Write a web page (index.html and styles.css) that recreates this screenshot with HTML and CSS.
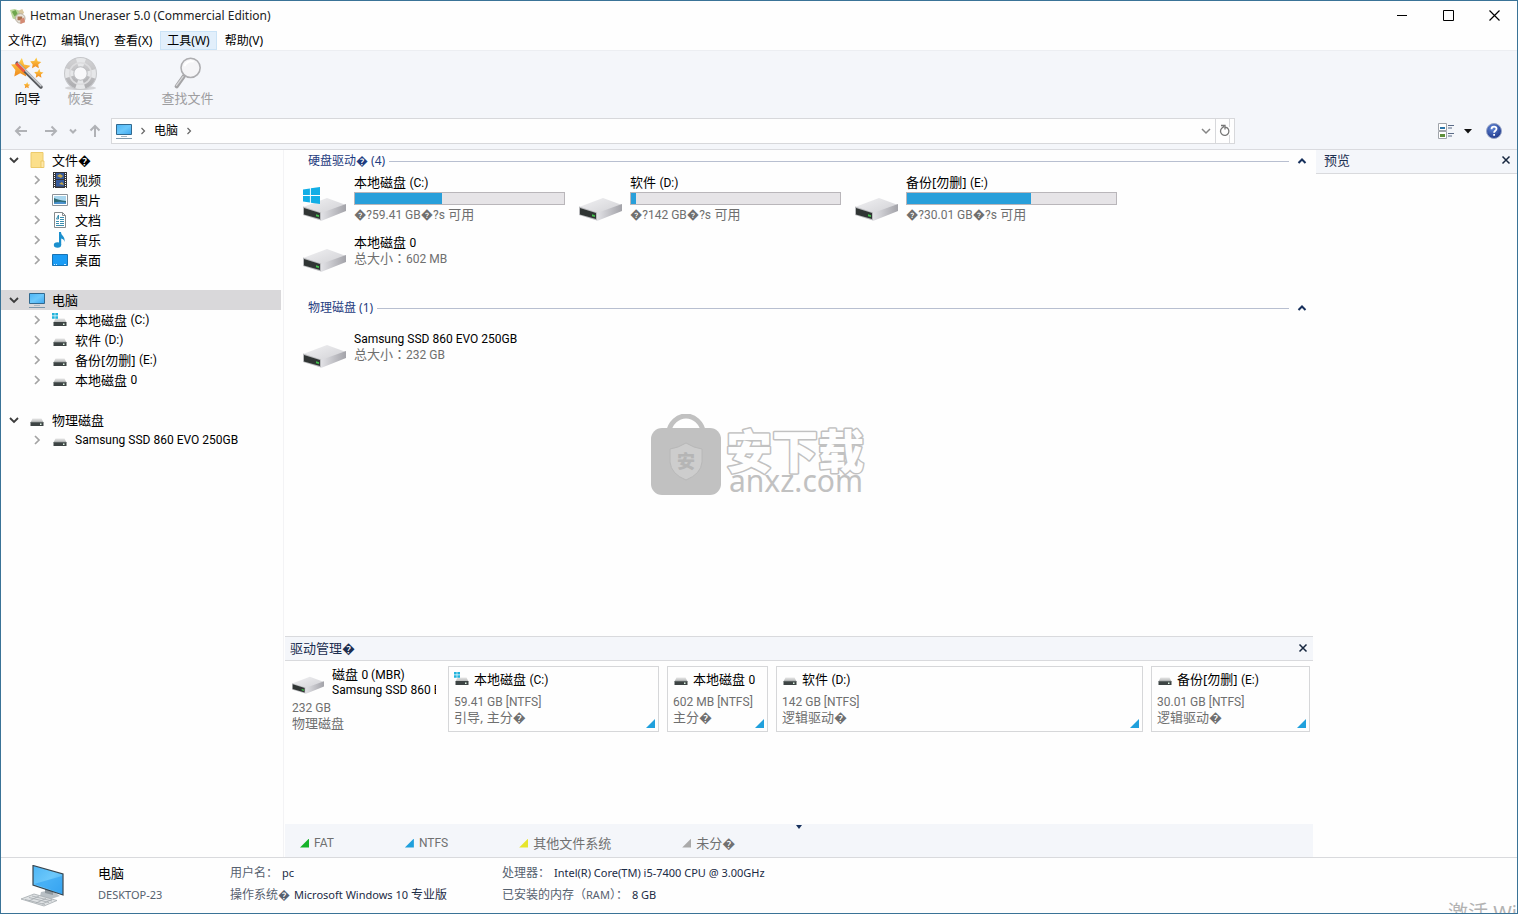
FILE: index.html
```
<!DOCTYPE html>
<html lang="zh-CN">
<head>
<meta charset="utf-8">
<title>Hetman Uneraser 5.0 (Commercial Edition)</title>
<link rel="stylesheet" href="styles.css">
</head>
<body>
<svg class="defs" aria-hidden="true">
  <defs>
    <linearGradient id="g-top" x1="0" y1="0" x2="1" y2="1"><stop offset="0" stop-color="#f1f1f3"/><stop offset="1" stop-color="#cfcfd3"/></linearGradient>
    <linearGradient id="g-side" x1="0" y1="0" x2="1" y2="0"><stop offset="0" stop-color="#e2e2e6"/><stop offset="1" stop-color="#a3a3a9"/></linearGradient>
    <linearGradient id="g-screen" x1="0" y1="0" x2="1" y2="1"><stop offset="0" stop-color="#4db5f5"/><stop offset=".5" stop-color="#6cc8fb"/><stop offset="1" stop-color="#3ea7ef"/></linearGradient>
    <linearGradient id="g-star" x1="0" y1="0" x2="0" y2="1"><stop offset="0" stop-color="#ffd24d"/><stop offset="1" stop-color="#f08a1c"/></linearGradient>
    <linearGradient id="g-mini" x1="0" y1="0" x2="0" y2="1"><stop offset="0" stop-color="#e6e6e6"/><stop offset="1" stop-color="#b4b6b6"/></linearGradient>
    <radialGradient id="g-help" cx=".4" cy=".3" r=".8"><stop offset="0" stop-color="#5f86d8"/><stop offset="1" stop-color="#182f80"/></radialGradient>
    <linearGradient id="g-ring" x1="0" y1="0" x2="0" y2="1"><stop offset="0" stop-color="#cfcfd1"/><stop offset="1" stop-color="#b0b0b3"/></linearGradient>
  </defs>
  <symbol id="drive" viewBox="0 0 43 34">
    <path d="M0 20 24 11 43 18 18 28Z" fill="url(#g-top)"/>
    <path d="M18 26 43 17V24L18 34Z" fill="url(#g-side)"/>
    <path d="M0 19.500 18 25.500V33.500L0 28Z" fill="#b9babd"/>
    <path d="M1 21 17 26V32L1 27.500Z" fill="#303534"/>
    <path d="M13 27.300 16 28.200V30L13 29.200Z" fill="#42c24b"/>
  </symbol>
  <symbol id="winlogo" viewBox="0 0 16 16">
    <path d="M0 2.300 6.500 1.400V7.600H0ZM7.400 1.200 16 0V7.600H7.400ZM0 8.400H6.500V14.600L0 13.700ZM7.400 8.400H16V16L7.400 14.800Z" fill="#12aee6"/>
  </symbol>
  <symbol id="mini" viewBox="0 0 16 16">
    <path d="M3.500 6.500H12.500L14.500 10.500H1.500Z" fill="url(#g-mini)"/>
    <path d="M1.500 10H14.500V14H1.500Z" fill="#3d4444"/>
    <path d="M2 10.300H14" stroke="#747a7a" stroke-width=".7"/>
    <path d="M11 11.500h1.500v1.500H11Z" fill="#dff5e4"/>
  </symbol>
  <symbol id="mini-win" viewBox="0 0 16 16">
    <path d="M3.500 6.500H12.500L14.500 10.500H1.500Z" fill="url(#g-mini)"/>
    <path d="M1.500 10H14.500V14H1.500Z" fill="#3d4444"/>
    <path d="M11 11.500h1.500v1.500H11Z" fill="#dff5e4"/>
    <path d="M0 1h2.700v2.500H0ZM3.300 1H6v2.500H3.300ZM0 4.200h2.700v2.500H0ZM3.300 4.200H6v2.500H3.300Z" fill="#22b3dc"/>
  </symbol>
  <symbol id="pc" viewBox="0 0 16 16">
    <path d="M.5 1.500H15.500V11.500H.5Z" fill="url(#g-screen)" stroke="#32698f"/>
    <path d="M5 13.500h6" stroke="#a9b8c4"/><path d="M0 15.500H16" stroke="#7d98ab"/>
  </symbol>
  <symbol id="open" viewBox="0 0 10 10"><path d="M1 3 5 7 9 3" fill="none" stroke="#3c3c3c" stroke-width="1.800"/></symbol>
  <symbol id="closed" viewBox="0 0 10 10"><path d="M3 1 7 5 3 9" fill="none" stroke="#a3a3a3" stroke-width="1.700"/></symbol>
  <symbol id="x" viewBox="0 0 10 10"><path d="M1.500 1.500 8.500 8.500M8.500 1.500 1.500 8.500" fill="none" stroke="#17273f" stroke-width="1.500"/></symbol>
  <symbol id="up" viewBox="0 0 10 10"><path d="M1.500 7 5 3.500 8.500 7" fill="none" stroke="#17305c" stroke-width="2"/></symbol>
  <symbol id="star" viewBox="0 0 20 20"><path d="M11 1 13 7 19 8 14 12 15 18 9.500 15 4 18 5 12 1 7 7.500 6.500Z" fill="url(#g-star)"/></symbol>
</svg>

<header class="titlebar">
  <svg class="app-icon" viewBox="0 0 18 18" aria-hidden="true">
    <path d="M1 2 6 1 11 3 13 8 9 13 4 11Z" fill="#b9d59a"/><path d="M3 4 7 2 9 6 6 9Z" fill="#6fa64d"/>
    <path d="M10 3 14 1 16 5 13 8Z" fill="#d9c7a0"/><circle cx="12" cy="11" r="5" fill="#e7e4dc" stroke="#b5aa9b"/>
    <path d="M9 9h5v4H9Z" fill="#a8714f"/><path d="M12 12 16 10 17 15 12 17Z" fill="#d48a73"/>
  </svg>
  <h1 class="title">Hetman Uneraser 5.0 (Commercial Edition)</h1>
  <div class="window-buttons">
    <button type="button" aria-label="最小化"><svg viewBox="0 0 11 11"><path d="M0 5.500H10" stroke="#000"/></svg></button>
    <button type="button" aria-label="最大化"><svg viewBox="0 0 11 11"><path d="M.5.500H10.500V10.500H.5Z" fill="none" stroke="#000"/></svg></button>
    <button type="button" aria-label="关闭"><svg viewBox="0 0 11 11"><path d="M.5.500 10.500 10.500M10.500.500.500 10.500" stroke="#000" stroke-width="1.200"/></svg></button>
  </div>
</header>

<nav class="menubar">
  <button type="button">文件(Z)</button>
  <button type="button">编辑(Y)</button>
  <button type="button">查看(X)</button>
  <button type="button" class="hot">工具(W)</button>
  <button type="button">帮助(V)</button>
</nav>

<div class="toolbar">
  <button type="button" class="tool">
    <svg viewBox="0 0 32 32" aria-hidden="true">
      <use href="#star" x="-1" y="0" width="21" height="21"/><use href="#star" x="18" y="0" width="12" height="12"/>
      <use href="#star" x="22" y="11" width="10" height="10"/><use href="#star" x="12" y="24" width="7" height="7"/>
      <path d="M6 6 29 29" stroke="#55585c" stroke-width="3.500" stroke-linecap="round"/><path d="M6.500 5.500 29.500 28.500" stroke="#c9ccd0" stroke-width="1.500"/>
      <path d="M5 6 13 14" stroke="#ee5a3e" stroke-width="2.600"/>
    </svg>
    <span>向导</span>
  </button>
  <button type="button" class="tool" disabled>
    <svg viewBox="0 0 32 32" aria-hidden="true">
      <ellipse cx="16" cy="30" rx="15" ry="2" fill="#d3d4d7"/>
      <circle cx="16" cy="16" r="11" fill="none" stroke="#e6e7e9" stroke-width="9"/>
      <circle cx="16" cy="16" r="11" fill="none" stroke="url(#g-ring)" stroke-width="9" stroke-dasharray="10 7.279" stroke-dashoffset="-3.640"/>
      <circle cx="16" cy="16" r="15.500" fill="none" stroke="#c6c7ca"/><circle cx="16" cy="16" r="10.500" fill="none" stroke="#dcdcde" stroke-width="1.500"/><circle cx="16" cy="16" r="6.500" fill="#f8f8fa" stroke="#bcbdc0"/>
    </svg>
    <span>恢复</span>
  </button>
  <button type="button" class="tool find" disabled>
    <svg viewBox="0 0 32 32" aria-hidden="true">
      <path d="M12.500 18.500 5.500 28.500" stroke="#a4a4a6" stroke-width="4" stroke-linecap="round"/><path d="M12 18.500 5 28" stroke="#d8d8da" stroke-width="1.200"/>
      <circle cx="19" cy="10.500" r="9.300" fill="#f5f5f7" stroke="#adadb0" stroke-width="1.500"/><path d="M13 9a7 7 0 0 1 9-4.500" fill="none" stroke="#fff" stroke-width="2"/>
    </svg>
    <span>查找文件</span>
  </button>
</div>

<div class="navbar">
  <div class="history">
    <button type="button" aria-label="后退"><svg viewBox="0 0 14 14"><path d="M13 7H2M6.500 2.500 2 7 6.500 11.500"/></svg></button>
    <button type="button" aria-label="前进"><svg viewBox="0 0 14 14"><path d="M1 7H12M7.500 2.500 12 7 7.500 11.500"/></svg></button>
    <button type="button" class="narrow" aria-label="历史"><svg viewBox="0 0 14 14"><path d="M4 5.500 7 8.500 10 5.500"/></svg></button>
    <button type="button" aria-label="向上"><svg viewBox="0 0 14 14"><path d="M7 13V2M2.500 6.500 7 2 11.500 6.500"/></svg></button>
  </div>
  <div class="address">
    <svg class="i16" aria-hidden="true"><use href="#pc"/></svg>
    <svg class="crumb" viewBox="0 0 6 8"><path d="M1.500 1 4.500 4 1.500 7"/></svg>
    <button type="button" class="place">电脑</button>
    <svg class="crumb" viewBox="0 0 6 8"><path d="M1.500 1 4.500 4 1.500 7"/></svg>
    <button type="button" class="drop" aria-label="展开"><svg viewBox="0 0 10 10"><path d="M1 3 5 7 9 3"/></svg></button>
    <button type="button" class="refresh" aria-label="刷新"><svg viewBox="0 0 18 24"><path d="M9.500 8.100A4.200 4.200 0 1 1 6 9L8 7.500M5 6.500H9V10.500"/><path d="M13.500 0V8M13.500 16V24" class="edge"/></svg></button>
  </div>
  <div class="view-tools">
    <button type="button" class="view" aria-label="视图">
      <svg class="i16" viewBox="0 0 16 16"><path d="M.5.500H8.500V7.500H.5ZM.5 8.500H8.500V15.500H.5Z" fill="#fff" stroke="#a0a4aa"/><path d="M2 4h5v2H2Z" fill="#2e76a8"/><path d="M2 11h5v3H2Z" fill="#5f8f3a"/><path d="M10 2.500h6M10 5h4M10 10.500h6M10 13h4" stroke="#5a6a86"/></svg>
      <svg class="tri" viewBox="0 0 8 5"><path d="M0 0H8L4 4.500Z" fill="#111"/></svg>
    </button>
    <button type="button" aria-label="帮助">
      <svg class="i16" viewBox="0 0 16 16"><circle cx="8" cy="8" r="7.500" fill="url(#g-help)" stroke="#9aa7c8"/><path d="M5.500 6.200C5.500 2.800 10.800 3 10.500 6 10.300 7.800 8.100 7.700 8.100 9.700M8.100 11v1.800" fill="none" stroke="#fff" stroke-width="1.800"/></svg>
    </button>
  </div>
</div>

<main class="workspace">
  <aside class="sidebar">
    <ul class="tree">
      <li>
        <button type="button" class="node"><svg class="i10"><use href="#open"/></svg><svg class="i16" viewBox="0 0 16 16"><path d="M2 .5H14V15.500H2Z" fill="#fbdf8b" stroke="#ecca6b"/><path d="M12 9h3v6.500h-3Z" fill="#ffe9a8" stroke="#e5bf57" stroke-width=".7"/></svg>文件�</button>
        <ul>
          <li><button type="button" class="node"><svg class="i10"><use href="#closed"/></svg><svg class="i16" viewBox="0 0 16 16"><path d="M1 0H15V16H1Z" fill="#363638"/><path d="M4 1h8v6H4ZM4 8h8v6.500H4Z" fill="#365a9c"/><path d="M5 4l3-2 3 2-2 2ZM7 12l3-2 2 3Z" fill="#c4a545"/><path d="M2.500 1V16M13.500 1V16" stroke="#fff" stroke-dasharray="1 1"/></svg>视频</button></li>
          <li><button type="button" class="node"><svg class="i10"><use href="#closed"/></svg><svg class="i16" viewBox="0 0 16 16"><path d="M.5 2.500H15.500V13.500H.5Z" fill="#fff" stroke="#8c9299"/><path d="M2 4h12v8H2Z" fill="#a9d6ee"/><path d="M2 6Q6 8 14 9V12H2Z" fill="#2f6c76"/><path d="M2 10.500Q8 9 14 10.500V12H2Z" fill="#4c93cf"/></svg>图片</button></li>
          <li><button type="button" class="node"><svg class="i10"><use href="#closed"/></svg><svg class="i16" viewBox="0 0 16 16"><path d="M2.500.500H10.500L13.500 3.500V15.500H2.500Z" fill="#fff" stroke="#858a8c"/><path d="M10.500.500V3.500H13.500" fill="none" stroke="#858a8c"/><path d="M8 5.500h4M8 7.500h4M4 9.500h3M8 9.500h4M4 11.500h3M8 11.500h4M4 13.500h8M4.500 7 6.500 3V7Z" stroke="#398dae" fill="none"/></svg>文档</button></li>
          <li><button type="button" class="node"><svg class="i10"><use href="#closed"/></svg><svg class="i16" viewBox="0 0 16 16"><ellipse cx="5.500" cy="13" rx="3.700" ry="2.700" fill="#1b8fcd"/><path d="M7 0H9C9 4 13.500 4 12.500 10 12 7.500 11 7 9.200 6.500V13H7Z" fill="#1b8fcd"/></svg>音乐</button></li>
          <li><button type="button" class="node"><svg class="i10"><use href="#closed"/></svg><svg class="i16" viewBox="0 0 16 16"><path d="M.5 2.500H15.500V13.500H.5Z" fill="#1a9cf5" stroke="#1873b4"/><path d="M2 12.500h1M4 12.500h1M12 12.500h2" stroke="#cdeaff"/></svg>桌面</button></li>
        </ul>
      </li>
      <li>
        <button type="button" class="node selected"><svg class="i10"><use href="#open"/></svg><svg class="i16"><use href="#pc"/></svg>电脑</button>
        <ul>
          <li><button type="button" class="node"><svg class="i10"><use href="#closed"/></svg><svg class="i16"><use href="#mini-win"/></svg>本地磁盘 <span class="lat">(C:)</span></button></li>
          <li><button type="button" class="node"><svg class="i10"><use href="#closed"/></svg><svg class="i16"><use href="#mini"/></svg>软件 <span class="lat">(D:)</span></button></li>
          <li><button type="button" class="node"><svg class="i10"><use href="#closed"/></svg><svg class="i16"><use href="#mini"/></svg>备份[勿删] <span class="lat">(E:)</span></button></li>
          <li><button type="button" class="node"><svg class="i10"><use href="#closed"/></svg><svg class="i16"><use href="#mini"/></svg>本地磁盘 <span class="lat">0</span></button></li>
        </ul>
      </li>
      <li>
        <button type="button" class="node"><svg class="i10"><use href="#open"/></svg><svg class="i16"><use href="#mini"/></svg>物理磁盘</button>
        <ul>
          <li><button type="button" class="node"><svg class="i10"><use href="#closed"/></svg><svg class="i16"><use href="#mini"/></svg><span class="lat">Samsung SSD 860 EVO 250GB</span></button></li>
        </ul>
      </li>
    </ul>
  </aside>

  <div class="center">
    <section class="browser">
      <div class="group">
        <h2 class="group-head"><span>硬盘驱动� (4)</span><i class="rule"></i><button type="button" aria-label="折叠"><svg class="i10"><use href="#up"/></svg></button></h2>
        <div class="drives">
          <div class="drive metered">
            <svg viewBox="0 0 43 34"><use href="#drive" width="43" height="34"/><use href="#winlogo" width="17" height="17"/></svg>
            <div class="info"><div>本地磁盘 <span class="lat">(C:)</span></div><div class="meter"><div class="fill" style="width:41.5%"></div></div><div class="sub"><span class="lat">�?59.41 GB�?s</span> 可用</div></div>
          </div>
          <div class="drive metered">
            <svg viewBox="0 0 43 34"><use href="#drive" width="43" height="34"/></svg>
            <div class="info"><div>软件 <span class="lat">(D:)</span></div><div class="meter"><div class="fill" style="width:2.4%"></div></div><div class="sub"><span class="lat">�?142 GB�?s</span> 可用</div></div>
          </div>
          <div class="drive metered">
            <svg viewBox="0 0 43 34"><use href="#drive" width="43" height="34"/></svg>
            <div class="info"><div>备份[勿删] <span class="lat">(E:)</span></div><div class="meter"><div class="fill" style="width:59.3%"></div></div><div class="sub"><span class="lat">�?30.01 GB�?s</span> 可用</div></div>
          </div>
          <div class="drive">
            <svg viewBox="0 0 43 34"><use href="#drive" width="43" height="34"/></svg>
            <div class="info"><div>本地磁盘 <span class="lat">0</span></div><div class="sub">总大小<span class="colon" lang="zh-TW">：</span><span class="lat">602 MB</span></div></div>
          </div>
        </div>
      </div>
      <div class="group physical">
        <h2 class="group-head"><span>物理磁盘 (1)</span><i class="rule"></i><button type="button" aria-label="折叠"><svg class="i10"><use href="#up"/></svg></button></h2>
        <div class="drives">
          <div class="drive">
            <svg viewBox="0 0 43 34"><use href="#drive" width="43" height="34"/></svg>
            <div class="info"><div><span class="lat">Samsung SSD 860 EVO 250GB</span></div><div class="sub">总大小<span class="colon" lang="zh-TW">：</span><span class="lat">232 GB</span></div></div>
          </div>
        </div>
      </div>
      <svg class="watermark" viewBox="0 0 216 84">
        <path d="M18 20C22-4 50-4 54 20" fill="none" stroke="#c1c1c1" stroke-width="5"/>
        <rect x="1" y="14" width="70" height="67" rx="11" fill="#c1c1c1"/>
        <path d="M36 29Q44 34 52 35V48Q51 60 36 66 21 60 20 48V35Q28 34 36 29Z" fill="#cdcdcd" stroke="#b8b8b8"/>
        <text x="36" y="54" class="wm-badge">安</text>
        <text x="76" y="54" class="wm-name">安下载</text>
        <text x="79" y="78" class="wm-site">anxz.com</text>
      </svg>
    </section>

    <section class="manager">
      <div class="panel-head"><h2>驱动管理�</h2><button type="button" aria-label="关闭"><svg class="i10"><use href="#x"/></svg></button></div>
      <div class="disk-map">
        <div class="disk">
          <div class="disk-title">
            <svg viewBox="0 10 43 24"><use href="#drive" width="43" height="34"/></svg>
            <div class="disk-name"><div>磁盘 <span class="lat">0 (MBR)</span></div><div><span class="lat">Samsung SSD 860 EVO 250GB</span></div></div>
          </div>
          <div class="sub"><span class="lat">232 GB</span></div>
          <div class="sub">物理磁盘</div>
        </div>
        <div class="parts" style="grid-template-columns:211fr 101fr 367fr 159fr">
          <div class="part"><div class="part-name"><svg class="i16"><use href="#mini-win"/></svg><span>本地磁盘 <span class="lat">(C:)</span></span></div><div class="sub"><span class="lat">59.41 GB [NTFS]</span></div><div class="sub">引导, 主分�</div></div>
          <div class="part"><div class="part-name"><svg class="i16"><use href="#mini"/></svg><span>本地磁盘 <span class="lat">0</span></span></div><div class="sub"><span class="lat">602 MB [NTFS]</span></div><div class="sub">主分�</div></div>
          <div class="part"><div class="part-name"><svg class="i16"><use href="#mini"/></svg><span>软件 <span class="lat">(D:)</span></span></div><div class="sub"><span class="lat">142 GB [NTFS]</span></div><div class="sub">逻辑驱动�</div></div>
          <div class="part"><div class="part-name"><svg class="i16"><use href="#mini"/></svg><span>备份[勿删] <span class="lat">(E:)</span></span></div><div class="sub"><span class="lat">30.01 GB [NTFS]</span></div><div class="sub">逻辑驱动�</div></div>
        </div>
      </div>
      <div class="legend">
        <svg class="tri grip" viewBox="0 0 8 5"><path d="M1 0H7L4 4Z" fill="#17305c"/></svg>
        <span class="key fat lat">FAT</span><span class="key ntfs lat">NTFS</span><span class="key other">其他文件系统</span><span class="key free">未分�</span>
      </div>
    </section>
  </div>

  <aside class="preview">
    <div class="panel-head"><h2>预览</h2><button type="button" aria-label="关闭"><svg class="i10"><use href="#x"/></svg></button></div>
  </aside>
</main>

<footer class="status">
  <svg class="computer" viewBox="0 0 44 42" aria-hidden="true">
    <path d="M20 27 30 25 39 31 30 34 19 31Z" fill="#b9c0c5"/><path d="M24 22 32 25V30L24 28Z" fill="#8e979d"/>
    <path d="M12 .5 42 9V30L12 20Z" fill="url(#g-screen)" stroke="#37444e" stroke-width="1.200"/><path d="M13 19 41 11V28.500Z" fill="#2ea0f2" opacity=".6"/>
    <path d="M0 34 13 29 36 35.500 23 41Z" fill="#dfe2e4" stroke="#a5abaf" stroke-width=".8"/><path d="M4 34.500 24 39.500M8 32.500 28 37.500M11 31 31 36M8 36 18 31M15 38 25 33.500M21 39 31 34.500" stroke="#a5abaf" stroke-width=".8"/>
  </svg>
  <div class="machine"><div class="pc-name">电脑</div><div class="host">DESKTOP-23</div></div>
  <dl class="user"><div><dt>用户名：</dt><dd>pc</dd></div><div><dt>操作系统�</dt><dd>Microsoft Windows 10 <span class="cjk">专业版</span></dd></div></dl>
  <dl class="hardware"><div><dt>处理器：</dt><dd>Intel(R) Core(TM) i5-7400 CPU @ 3.00GHz</dd></div><div><dt>已安装的内存（<span class="small">RAM</span>）：</dt><dd>8 GB</dd></div></dl>
  <div class="activate">激活 Wi</div>
</footer>
</body>
</html>
```
FILE: styles.css
```
* { box-sizing: border-box; }
body {
  margin: 0;
  min-height: 100vh;
  display: flex;
  flex-direction: column;
  border: 1px solid #3a7397;
  background: #fefefe;
  color: #000;
  font: 13px/16px "Noto Sans", "Noto Sans CJK SC", sans-serif;
}
h1, h2, ul, dl, dd { margin: 0; padding: 0; font-size: inherit; font-weight: 400; }
ul { list-style: none; }
button { margin: 0; padding: 0; border: 0; background: none; color: inherit; font: inherit; }
svg { display: block; flex: none; }
.defs { position: absolute; width: 0; height: 0; }
.i10 { width: 10px; height: 10px; }
.i16 { width: 16px; height: 16px; }
.tri { width: 8px; height: 5px; }
.lat { font-family: Roboto, "Noto Sans", sans-serif; font-size: 12px; line-height: 12px; }
.colon { font-family: "Noto Sans CJK TC", sans-serif; line-height: 12px; }
.sub { color: #6f6f6f; }

.titlebar { display: flex; align-items: center; height: 30px; padding-left: 8px; }
.app-icon { width: 17px; height: 17px; margin-right: 4px; }
.title { flex: 1; font-size: 12px; color: #222; }
.window-buttons { display: flex; align-self: flex-start; }
.window-buttons button { width: 46px; height: 28px; display: grid; place-items: center; }
.window-buttons svg { width: 11px; height: 11px; }

.menubar { display: flex; gap: 1px; height: 19px; font-size: 12px; }
.menubar button { padding: 0 6px; border: 1px solid transparent; line-height: 16px; white-space: nowrap; }
.menubar .hot { background: #e2effb; border-color: #cbe3f6; }

.toolbar { display: flex; height: 63px; padding-top: 6px; border-top: 1px solid #eceef2; background: #f4f6fa; }
.tool { display: flex; flex-direction: column; align-items: center; width: 53px; white-space: nowrap; }
.tool svg { width: 33px; height: 33px; }
.tool:disabled { color: #9d9d9f; }
.find { margin-left: 54px; }

.navbar { display: flex; align-items: center; height: 37px; padding: 0 15px 0 13px; background: #f4f6fa; border-bottom: 1px solid #dadbdf; }
.history { display: flex; gap: 16px; width: 97px; }
.history svg { width: 14px; height: 14px; fill: none; stroke: #b0b2b6; stroke-width: 2; }
.history .narrow { margin: 0 -8px; }
.address { flex: 1; display: flex; align-items: center; height: 26px; padding-left: 4px; background: #fefefe; border: 1px solid #d7d8db; }
.crumb { width: 6px; height: 8px; margin: 0 8px; fill: none; stroke: #666; stroke-width: 1.200; }
.place { font-size: 12px; }
.drop { margin-left: auto; padding: 0 4px; }
.drop svg { width: 10px; height: 10px; fill: none; stroke: #858585; stroke-width: 1.500; }
.refresh { width: 19px; height: 24px; border-left: 1px solid #d7d8db; }
.refresh svg { width: 18px; height: 24px; fill: none; stroke: #777; stroke-width: 1.300; }
.refresh .edge { stroke: #d7d8db; stroke-width: 1; }
.view-tools { display: flex; justify-content: flex-end; align-items: center; gap: 14px; width: 267px; }
.view { display: flex; align-items: center; gap: 10px; }

.workspace { flex: 1; display: flex; }
.sidebar { width: 283px; padding-right: 2px; border-right: 1px solid #f3f3f5; }
.tree > li { margin-bottom: 20px; }
.node { display: flex; align-items: center; width: 100%; height: 20px; padding-left: 8px; text-align: left; white-space: pre; }
.node .i16 { margin: 0 7px 0 10px; }
.tree ul .node { padding-left: 31px; }
.selected { background: #d9d8da; }

.center { flex: 1; min-width: 0; display: flex; flex-direction: column; }
.browser { position: relative; flex: 1; }
.group-head { display: flex; align-items: center; gap: 4px; height: 22px; padding: 0 9px 0 24px; color: #1e3c80; font-size: 12px; }
.rule { flex: 1; height: 1px; margin-right: 4px; background: #b8bfd0; }
.drives { display: grid; grid-template-columns: repeat(auto-fill, 276px); row-gap: 12px; padding: 2px 0 0 19px; }
.drive { display: flex; gap: 8px; min-height: 38px; }
.drive svg { width: 43px; height: 34px; margin-top: 4px; }
.metered { min-height: 48px; }
.metered svg { margin-top: 13px; }
.info { white-space: nowrap; }
.meter { width: 211px; height: 13px; margin: 2px 0 1px; border: 1px solid #b9b6ba; background: #e6e4e7; }
.fill { height: 100%; background: #289fda; }
.physical { margin-top: 25px; }
.physical .drives { padding-top: 11px; }
.watermark { position: absolute; left: 366px; top: 264px; width: 216px; height: 84px; }
.wm-badge { font: 900 18px "Noto Sans CJK SC", sans-serif; fill: #b5b5b5; text-anchor: middle; }
.wm-name { font: 900 46px "Noto Sans CJK SC", sans-serif; fill: #fefefe; stroke: #c1c1c1; stroke-width: 3px; stroke-linejoin: round; paint-order: stroke; }
.wm-site { font: 30px "Noto Sans", sans-serif; fill: #c1c1c1; }

.panel-head { display: flex; align-items: center; justify-content: space-between; background: #f4f6fa; border-bottom: 1px solid #d9dadd; color: #1b2e50; }
.manager .panel-head { height: 25px; margin-right: 3px; padding: 0 5px 2px; border-top: 1px solid #d9dadd; }
.manager { padding-left: 1px; }
.disk-map { display: flex; gap: 12px; height: 163px; padding: 5px 6px 0 7px; }
.disk { width: 144px; padding-top: 1px; }
.disk-title { display: flex; gap: 8px; height: 32px; }
.disk-title svg { width: 32px; height: 18px; margin-top: 9px; }
.disk-name { overflow: hidden; white-space: nowrap; line-height: 15px; }
.parts { flex: 1; display: grid; gap: 8px; height: 66px; }
.part { position: relative; min-width: 0; padding: 4px 5px; border: 1px solid #d6d7d9; white-space: nowrap; overflow: hidden; }
.part::after { content: ""; position: absolute; right: 3px; bottom: 3px; width: 9px; height: 9px; background: #20a0dc; clip-path: polygon(100% 0, 100% 100%, 0 100%); }
.part-name { display: flex; gap: 4px; margin-bottom: 6px; }
.legend { position: relative; display: flex; align-items: center; gap: 71px; height: 33px; margin-right: 3px; padding: 5px 15px 0; background: #f4f6fa; color: #707070; }
.grip { position: absolute; left: calc(50% - 4px); top: 1px; }
.key { display: flex; align-items: center; gap: 5px; }
.key::before { content: ""; width: 9px; height: 9px; background: currentColor; clip-path: polygon(100% 0, 100% 100%, 0 100%); }
.fat::before { background: #16b32a; }
.ntfs::before { background: #20a0dc; }
.other::before { background: #e7e52c; }
.free::before { background: #aaa; }

.preview { width: 201px; }
.preview .panel-head { height: 24px; padding: 0 6px 3px 8px; }

.status { position: relative; display: flex; height: 56px; padding: 4px 0 0 20px; border-top: 1px solid #d9dadd; line-height: 22px; font-size: 12px; white-space: nowrap; overflow: hidden; }
.computer { width: 44px; height: 42px; margin-top: 3px; }
.machine { width: 132px; margin-left: 33px; }
.pc-name { font-size: 13px; }
.host { font-size: 11px; color: #56616f; }
.user { width: 272px; }
.status dl > div { display: flex; }
.status dt { color: #56616f; }
.status dd { margin-left: 4px; font-size: 11px; color: #1b2b45; }
.small { font-size: 11px; }
.cjk { font-size: 12px; }
.activate { position: absolute; right: 0; bottom: -14px; color: #b2b2b2; font-size: 20px; line-height: 28px; }
```
